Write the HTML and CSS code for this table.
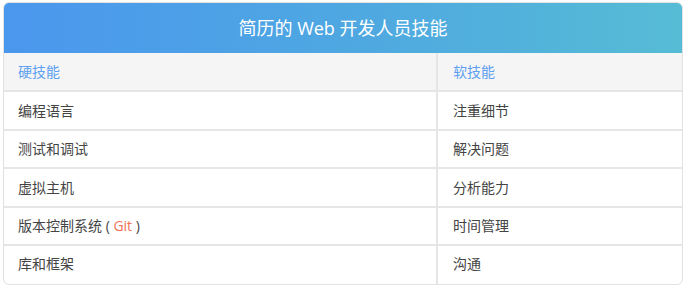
FILE: index.html
```html
<!DOCTYPE html>
<html lang="zh-CN">
<head>
<meta charset="utf-8">
<title>简历的 Web 开发人员技能</title>
<link rel="stylesheet" href="styles.css">
</head>
<body>
<div class="card">
  <div class="title">简历的 Web 开发人员技能</div>
  <div class="grid">
    <div class="cell head left">硬技能</div>
    <div class="cell head">软技能</div>
    <div class="cell left tall">编程语言</div>
    <div class="cell tall">注重细节</div>
    <div class="cell left">测试和调试</div>
    <div class="cell">解决问题</div>
    <div class="cell left tall">虚拟主机</div>
    <div class="cell tall">分析能力</div>
    <div class="cell left">版本控制系统 ( <span class="hl">Git</span> )</div>
    <div class="cell">时间管理</div>
    <div class="cell left last">库和框架</div>
    <div class="cell last">沟通</div>
  </div>
</div>
</body>
</html>
```

FILE: styles.css
```css
html, body {
  margin: 0;
  padding: 0;
  background: #ffffff;
}
body {
  padding: 2px 3px;
  font-family: "Open Sans", "Noto Sans CJK SC", sans-serif;
}
.card {
  width: 680px;
  box-sizing: border-box;
  border: 1px solid #e2e2e2;
  border-radius: 6px;
  overflow: hidden;
}
.title {
  height: 50px;
  line-height: 50px;
  text-align: center;
  color: #ffffff;
  font-size: 18px;
  background: linear-gradient(90deg, #4a97ee 0%, #4fa9e0 55%, #56bcd5 100%);
}
.grid {
  display: grid;
  grid-template-columns: 434px 1fr;
}
.cell {
  box-sizing: border-box;
  height: 38px;
  line-height: 36px;
  padding: 0 15px;
  font-size: 14px;
  color: #444444;
  border-bottom: 2px solid #e6e6e6;
}
.cell.tall {
  height: 39px;
  line-height: 37px;
}
.cell.left {
  padding-left: 14px;
  border-right: 2px solid #e6e6e6;
}
.cell.head {
  height: 39px;
  line-height: 37px;
  background: #f5f5f5;
  color: #5d9ff0;
}
.cell.last {
  border-bottom: none;
  height: 38px;
}
.hl {
  color: #f07156;
}
```
